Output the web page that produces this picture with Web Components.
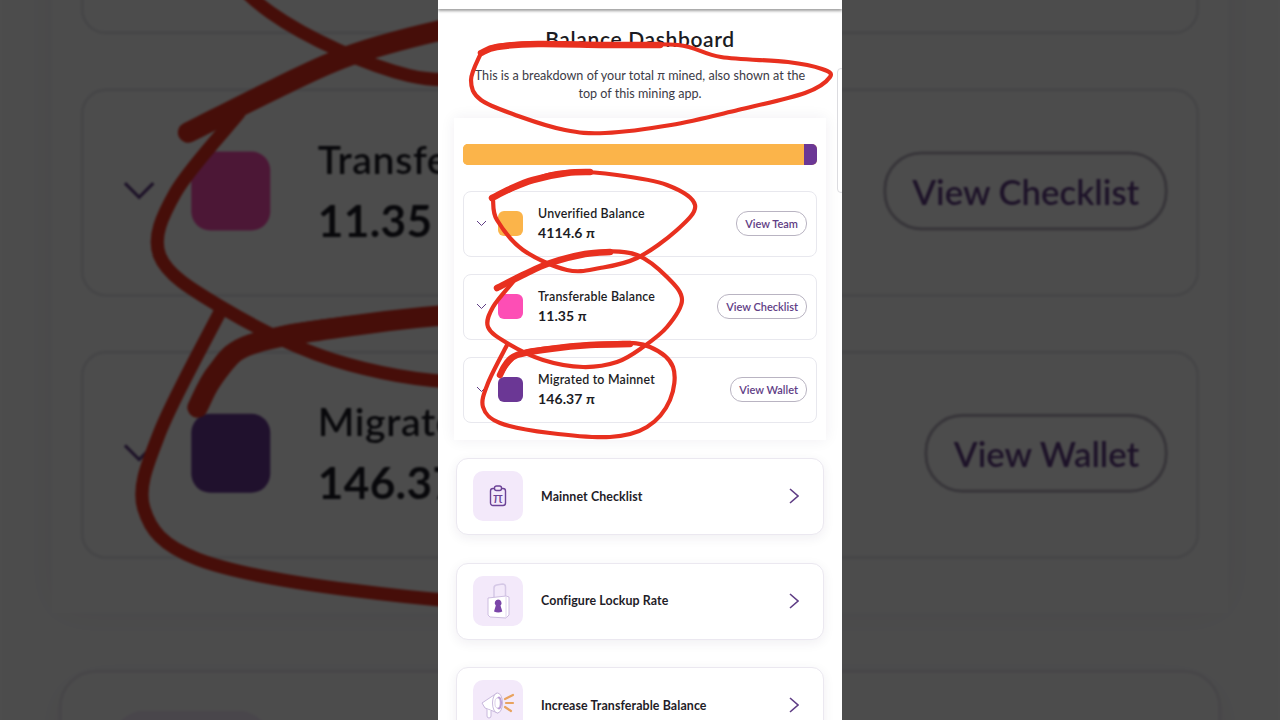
<!DOCTYPE html>
<html lang="en"><head><meta charset="utf-8"><title>Balance Dashboard</title>
<style>html,body{margin:0;padding:0;width:1280px;height:720px;overflow:hidden;background:#4d4d4d}</style>
</head><body>
<app-stage></app-stage>
<script>
const FONT='Lato,"Noto Sans",sans-serif';
class PillButton extends HTMLElement{constructor(){super();this.attachShadow({mode:'open'}).innerHTML=`<style>
:host{display:inline-flex;align-items:center;height:23px;padding:0 8px;border:1px solid #b9b4c2;border-radius:12px;color:#5f3d85;font:600 11px ${FONT};white-space:nowrap;background:#fff}
</style><slot></slot>`}}
class BalanceRow extends HTMLElement{constructor(){super();this.attachShadow({mode:'open'}).innerHTML=`<style>
:host{display:flex;align-items:center;height:66px;box-sizing:border-box;border:1px solid #e8e8ee;border-radius:8px;padding:0 9px 1px 12px}
svg{width:11px;height:7px;flex:none;margin-right:11px}
.sw{width:25px;height:25px;border-radius:6px;flex:none;margin-right:15px}
.t{flex:1;display:flex;flex-direction:column;gap:2px}
.l{font:600 12.4px/16px ${FONT};color:#1c1c24;letter-spacing:.2px}
.v{font:700 14px/18px ${FONT};color:#1c1c24;letter-spacing:.1px}
</style><svg viewBox="0 0 11 7"><path d="M1 1l4.5 4.5L10 1" fill="none" stroke="#5f3d85" stroke-width="1"/></svg>
<div class="sw"></div><div class="t"><div class="l"></div><div class="v"></div></div><pill-button></pill-button>`}
connectedCallback(){const s=this.shadowRoot;s.querySelector('.sw').style.background=this.getAttribute('color');s.querySelector('.l').textContent=this.getAttribute('label');s.querySelector('.v').textContent=this.getAttribute('value');s.querySelector('pill-button').textContent=this.getAttribute('action')}}
class ActionCard extends HTMLElement{constructor(){super();this.attachShadow({mode:'open'}).innerHTML=`<style>
:host{display:flex;align-items:center;height:77px;flex:none;box-sizing:border-box;background:#fff;border:1px solid #ebe8f0;border-radius:12px;box-shadow:0 3px 12px rgba(40,30,70,.07);padding:0 24px 1px 16px}
.ic{width:50px;height:50px;border-radius:10px;background:#f3e9fa;display:flex;align-items:center;justify-content:center;flex:none;margin-right:18px}
.t{flex:1;font:700 12.4px ${FONT};color:#1f1d28;letter-spacing:.1px}
svg.c{width:10px;height:16px;flex:none}
</style><div class="ic"><slot name="icon"></slot></div><div class="t"><slot></slot></div>
<svg class="c" viewBox="0 0 10 16"><path d="M1 1l8 7-8 7" fill="none" stroke="#5f3d85" stroke-width="1.6"/></svg>`}}
function smooth(p){let d=`M${p[0][0]} ${p[0][1]}`;for(let i=0;i<p.length-1;i++){const a=p[Math.max(i-1,0)],b=p[i],c=p[i+1],e=p[Math.min(i+2,p.length-1)];
d+=`C${(b[0]+(c[0]-a[0])/6).toFixed(1)} ${(b[1]+(c[1]-a[1])/6).toFixed(1)} ${(c[0]-(e[0]-b[0])/6).toFixed(1)} ${(c[1]-(e[1]-b[1])/6).toFixed(1)} ${c[0]} ${c[1]}`}return d}
const STROKES=[
 {thick:[[481,53],[497,47],[538,44],[605,45],[660,45]],thin:[[481,53],[497,46],[538,43],[605,45],[678,45],[721,57],[788,62],[822,69],[830,77],[805,93],[738,110],[671,125],[605,133],[565,130],[521,117],[481,100],[471,80],[481,53]]},
 {thick:[[492,198],[510,189],[533,180],[567,173],[590,172]],thin:[[492,198],[533,180],[567,172],[617,175],[667,185],[695,205],[677,230],[637,258],[600,268],[567,270],[523,250],[497,220],[493,200]]},
 {thick:[[497,288],[525,274],[550,263],[585,254],[610,252]],thin:[[497,288],[550,263],[600,252],[637,255],[667,277],[682,300],[667,327],[643,347],[617,362],[583,367],[543,360],[507,343],[488,327],[493,307],[513,282]]},
 {thick:[[500,375],[506,364],[517,355],[550,349],[590,345],[630,344]],thin:[[500,375],[517,355],[550,348],[617,343],[650,347],[673,367],[670,400],[647,427],[610,437],[550,433],[500,423],[483,407],[488,383],[507,345]]}
];
class InkMarks extends HTMLElement{constructor(){super();let h='';for(const s of STROKES){h+=`<path d="${smooth(s.thin)}" stroke-width="4.2"/><path d="${smooth(s.thick)}" stroke-width="6.5"/>`}
this.attachShadow({mode:'open'}).innerHTML=`<style>:host{position:absolute;inset:0;pointer-events:none}svg{display:block}</style>
<svg width="404" height="720" viewBox="438 0 404 720" fill="none" stroke="#e8301f" stroke-linecap="round" stroke-linejoin="round">${h}</svg>`}}
const piIcon=`<svg slot="icon" width="18" height="22" viewBox="0 0 18 22"><rect x="1.500" y="3.500" width="15" height="17" rx="2.500" fill="none" stroke="#6b4296" stroke-width="1.400"/><rect x="5.500" y="1" width="7" height="4.500" rx="2" fill="#f3e9fa" stroke="#6b4296" stroke-width="1.400"/><text x="9" y="17.500" text-anchor="middle" font-family="Liberation Sans,sans-serif" font-size="15" fill="#6b4296">π</text></svg>`;
const lockIcon=`<svg slot="icon" width="24" height="36" viewBox="0 0 24 36"><path d="M8 15V5q0-2.500 2.500-3l6-1q3 0 3 3v11" fill="none" stroke="#d5c8e6" stroke-width="1.500"/><path d="M2 15l18-2 3 1v18l-3 3-16-1-2-2z" fill="#fff" stroke="#cdbde0" stroke-width="1"/><path d="M20 13v22" stroke="#e2d6ee" stroke-width="1"/><path d="M12 16.500a3.500 3.500 0 0 1 2.500 6l1.800 6q-4 1.800-8.300 0l1.800-6a3.500 3.500 0 0 1 2.200-6z" fill="#7a45a8"/></svg>`;
const megaIcon=`<svg slot="icon" width="36" height="30" viewBox="0 0 36 30"><path d="M2 13l15-10q3 4 3 10t-2 10L5 18z" fill="#fff" stroke="#c8b8dc" stroke-width="1"/><ellipse cx="17.500" cy="13" rx="5" ry="10" fill="#fff" stroke="#c8b8dc" stroke-width="1"/><ellipse cx="19" cy="13" rx="3" ry="6.500" fill="#b89bd6"/><ellipse cx="17.500" cy="13" rx="2.600" ry="5" fill="#fff" stroke="#c8b8dc" stroke-width=".7"/><path d="M7 19v7q0 2 2 2t2-2v-5" fill="#fff" stroke="#c8b8dc" stroke-width="1"/><path d="M25 9l8-4M26 13h7M25 17l6 4" stroke="#e8a35f" stroke-width="2.200" stroke-linecap="round"/></svg>`;
class PhoneScreen extends HTMLElement{constructor(){super();this.attachShadow({mode:'open'}).innerHTML=`<style>
:host{display:block;position:relative;width:404px;height:720px;overflow:hidden;background:#fff;flex:none;font-family:${FONT}}
.top{height:9px;box-shadow:0 2px 3px rgba(0,0,0,.38);position:relative;background:#fff}
h1{margin:18px 0 0;font:600 21px/24px ${FONT};color:#1b1b22;text-align:center;letter-spacing:.65px}
p{margin:16px 32px 0;font:400 12.600px/18px ${FONT};color:#3c3b46;text-align:center}
.panel{margin:15px 16px 0;padding:26px 9px 17px;background:#fff;box-shadow:0 0 14px rgba(40,30,70,.07);display:flex;flex-direction:column}
.bar{display:flex;height:21px;border-radius:5px;overflow:hidden;margin-bottom:26px;background:#fbb44a}
.bar i{display:block}.o{flex:1;background:#fbb44a}.m{width:13px;background:#6b3795}
.rows{display:flex;flex-direction:column;gap:17px}
.acts{margin:18px 18px 0;display:flex;flex-direction:column;gap:27.500px}
.sb{position:absolute;left:399px;top:68px;width:8px;height:125px;box-sizing:border-box;border:1px solid #dcdce0;border-radius:4px}
</style><div class="top"></div><h1>Balance Dashboard</h1>
<p>This is a breakdown of your total π mined, also shown at the top of this mining app.</p>
<div class="panel"><div class="bar"><i class="o"></i><i class="m"></i></div><div class="rows">
<balance-row color="#fbb44a" label="Unverified Balance" value="4114.6 π" action="View Team"></balance-row>
<balance-row color="#fd4eb5" label="Transferable Balance" value="11.35 π" action="View Checklist"></balance-row>
<balance-row color="#6b3795" label="Migrated to Mainnet" value="146.37 π" action="View Wallet"></balance-row>
</div></div>
<div class="acts"><action-card>${piIcon}Mainnet Checklist</action-card><action-card>${lockIcon}Configure Lockup Rate</action-card><action-card>${megaIcon}Increase Transferable Balance</action-card></div>
<div class="sb"></div><ink-marks></ink-marks>`}}
class BlurBackdrop extends HTMLElement{constructor(){super();this.attachShadow({mode:'open'}).innerHTML=`<style>
:host{position:absolute;inset:0;display:flex;justify-content:center;overflow:hidden;background:#4d4d4d}
phone-screen{transform:scale(3.16);transform-origin:50% 50%;filter:brightness(.3) blur(.35px)}
</style><phone-screen></phone-screen>`}}
class AppStage extends HTMLElement{constructor(){super();this.attachShadow({mode:'open'}).innerHTML=`<style>
:host{display:flex;justify-content:center;position:relative;width:1280px;height:720px;overflow:hidden}
phone-screen{z-index:1}
</style><blur-backdrop></blur-backdrop><phone-screen></phone-screen>`}}
[['pill-button',PillButton],['balance-row',BalanceRow],['action-card',ActionCard],['ink-marks',InkMarks],['phone-screen',PhoneScreen],['blur-backdrop',BlurBackdrop],['app-stage',AppStage]].forEach(([n,c])=>customElements.define(n,c));
</script></body></html>
